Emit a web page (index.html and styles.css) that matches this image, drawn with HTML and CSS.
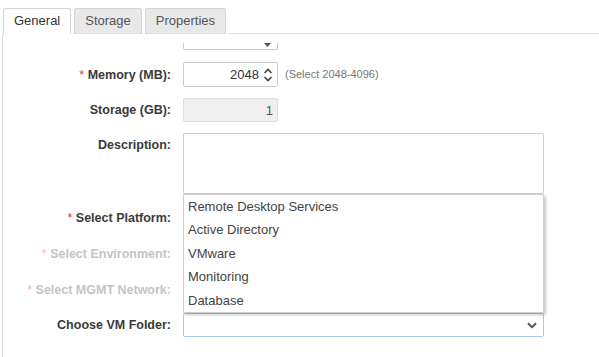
FILE: index.html
```html
<!DOCTYPE html>
<html lang="en">
<head>
  <meta charset="UTF-8">
  <title>VM Settings</title>
  <link rel="stylesheet" href="styles.css">
</head>
<body>
  <div class="tabs">
    <div class="tab active">General</div>
    <div class="tab">Storage</div>
    <div class="tab">Properties</div>
    <div class="tab-fill"></div>
  </div>
  <div class="panel">
    <div class="form">
      <div class="row stub-row">
        <div class="label"></div>
        <div class="stub">
          <svg class="stub-arrow" width="7" height="4" viewBox="0 0 7 4"><path d="M0 0h7L3.5 4z" fill="#555"/></svg>
        </div>
      </div>

      <div class="row">
        <div class="label"><span class="req">*</span> Memory (MB):</div>
        <div class="field-line">
          <div class="input small">
            <span class="value">2048</span>
            <svg class="spin" width="10" height="16" viewBox="0 0 10 16">
              <path d="M1.5 6 5 2.5 8.5 6" fill="none" stroke="#444" stroke-width="1.6"/>
              <path d="M1.5 10 5 13.5 8.5 10" fill="none" stroke="#444" stroke-width="1.6"/>
            </svg>
          </div>
          <span class="hint">(Select 2048-4096)</span>
        </div>
      </div>

      <div class="row">
        <div class="label">Storage (GB):</div>
        <div class="input small readonly"><span class="value">1</span></div>
      </div>

      <div class="row desc-row">
        <div class="label">Description:</div>
        <div class="textarea"></div>
      </div>

      <div class="row menu-row">
        <div class="label"><span class="req">*</span> Select Platform:</div>
        <div class="select-wrap">
          <div class="select"></div>
          <ul class="menu">
            <li>Remote Desktop Services</li>
            <li>Active Directory</li>
            <li>VMware</li>
            <li>Monitoring</li>
            <li>Database</li>
          </ul>
        </div>
      </div>

      <div class="row">
        <div class="label faded"><span class="req">*</span> Select Environment:</div>
        <div class="select"></div>
      </div>

      <div class="row">
        <div class="label faded"><span class="req">*</span> Select MGMT Network:</div>
        <div class="select"></div>
      </div>

      <div class="row">
        <div class="label">Choose VM Folder:</div>
        <div class="select focus">
          <svg class="chevron" width="10" height="7" viewBox="0 0 10 7"><path d="M1 1.2 5 5.2 9 1.2" fill="none" stroke="#555" stroke-width="2"/></svg>
        </div>
      </div>
    </div>
  </div>
</body>
</html>
```

FILE: styles.css
```css
body {
  margin: 0;
  padding: 0;
  background: #fff;
  font-family: "Liberation Sans", Arial, sans-serif;
  color: #333;
  overflow: hidden;
}
.tabs {
  display: flex;
  align-items: flex-end;
  gap: 3px;
  padding-left: 3px;
  padding-top: 8px;
}
.tab {
  height: 24px;
  padding: 0 10px;
  font-size: 13px;
  line-height: 24px;
  color: #555;
  background: #e8e8e8;
  border: 1px solid #d4d4d4;
  border-bottom: 1px solid #ddd;
  border-radius: 3px 3px 0 0;
}
.tab.active {
  color: #333;
  background: #fff;
  border-bottom-color: #fff;
}
.tab-fill {
  flex: 1;
  border-bottom: 1px solid #ddd;
}
.panel {
  margin-left: 2px;
  border-left: 1px solid #ddd;
  height: 330px;
}
.form {
  display: flex;
  flex-direction: column;
  gap: 11px;
  padding-top: 9px;
}
.row {
  display: grid;
  grid-template-columns: 168px 361px;
  column-gap: 12px;
  align-items: center;
}
.stub-row {
  margin-bottom: 1px;
}
.label {
  text-align: right;
  font-size: 12.5px;
  font-weight: bold;
  color: #3a3a3a;
  white-space: nowrap;
}
.req {
  color: #d9413a;
  font-weight: normal;
}
.label.faded {
  color: #c4c4c4;
}
.label.faded .req {
  color: #f2b8b5;
}
.stub {
  position: relative;
  width: 95px;
  height: 7px;
  box-sizing: border-box;
  border: 1px solid #ccc;
  border-top: none;
  border-radius: 0 0 2px 2px;
}
.stub-arrow {
  position: absolute;
  right: 6px;
  top: 0;
}
.field-line {
  display: flex;
  align-items: center;
  gap: 7px;
}
.input {
  display: flex;
  align-items: center;
  justify-content: flex-end;
  box-sizing: border-box;
  height: 25px;
  border: 1px solid #ccc;
  border-radius: 2px;
  padding: 0 4px;
  font-size: 13px;
  color: #333;
}
.input.small {
  width: 95px;
}
.spin {
  margin-left: 4px;
}
.input.readonly {
  height: 24px;
  background: #efefef;
  border-color: #dcdcdc;
  color: #555;
}
.hint {
  font-size: 11px;
  color: #777;
  margin-top: -2px;
}
.desc-row {
  align-items: start;
}
.desc-row .label {
  padding-top: 5px;
}
.textarea {
  height: 61px;
  box-sizing: border-box;
  border: 1px solid #ccc;
  border-radius: 2px;
}
.menu-row {
  position: relative;
  z-index: 2;
}
.select-wrap {
  position: relative;
}
.select {
  position: relative;
  height: 25px;
  box-sizing: border-box;
  border: 1px solid #ccc;
  border-radius: 2px;
}
.select.focus {
  height: 24px;
  border-color: #a9c9e8;
}
.chevron {
  position: absolute;
  right: 6px;
  top: 8px;
}
.menu {
  position: absolute;
  top: -11px;
  left: 0;
  right: 0;
  margin: 0;
  padding: 0;
  list-style: none;
  background: #fff;
  border: 1px solid #cfcfcf;
  box-shadow: 2px 2px 3px rgba(0, 0, 0, 0.22);
}
.menu li {
  height: 23.4px;
  line-height: 23.4px;
  padding-left: 4px;
  font-size: 13px;
  color: #444;
}
```
